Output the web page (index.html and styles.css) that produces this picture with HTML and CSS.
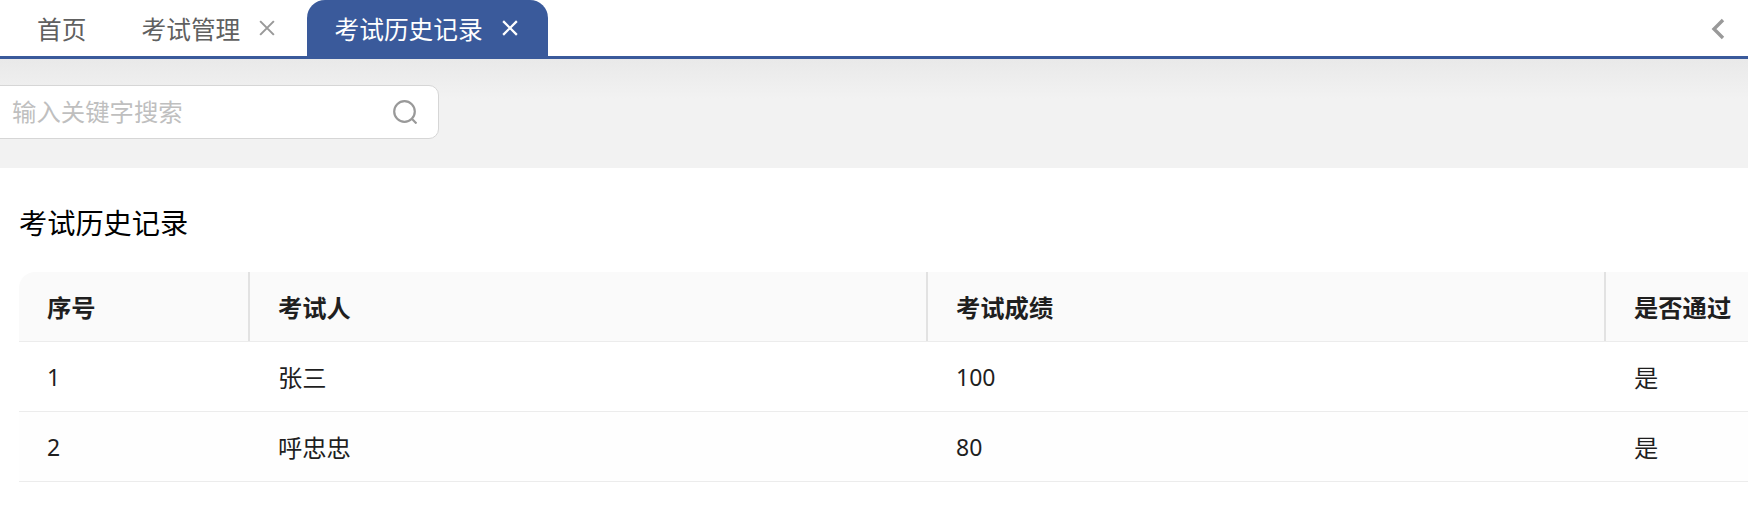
FILE: index.html
```html
<!DOCTYPE html>
<html lang="zh-CN">
<head>
<meta charset="utf-8">
<title>考试历史记录</title>
<link rel="stylesheet" href="styles.css">
</head>
<body>
<div class="tabbar">
  <div class="tab tab-home">首页</div>
  <div class="tab tab-plain">考试管理<svg class="close" viewBox="0 0 14 14"><path d="M1 1L13 13M13 1L1 13"/></svg></div>
  <div class="tab tab-active">考试历史记录<svg class="close" viewBox="0 0 14 14"><path d="M1 1L13 13M13 1L1 13"/></svg></div>
  <div class="spacer"></div>
  <svg class="chevron" viewBox="0 0 14 22"><path d="M12 2L3 11L12 20"/></svg>
</div>
<div class="searchband">
  <div class="search">
    <span class="placeholder">输入关键字搜索</span>
    <svg class="searchicon" viewBox="0 0 24 24"><circle cx="11.5" cy="11.5" r="10.3"/><path d="M18.8 18.8L23.5 23.5"/></svg>
  </div>
</div>
<div class="content">
  <h1 class="title">考试历史记录</h1>
  <table class="grid">
    <colgroup><col class="c1"><col class="c2"><col class="c3"><col class="c4"></colgroup>
    <thead>
      <tr><th>序号</th><th>考试人</th><th>考试成绩</th><th>是否通过</th></tr>
    </thead>
    <tbody>
      <tr><td class="num">1</td><td>张三</td><td class="num">100</td><td>是</td></tr>
      <tr class="alt"><td class="num">2</td><td>呼忠忠</td><td class="num">80</td><td>是</td></tr>
    </tbody>
  </table>
</div>
</body>
</html>
```
FILE: styles.css
```css
* { box-sizing: border-box; }
html, body { margin: 0; padding: 0; background: #fff; overflow: hidden; width: 1748px; height: 510px; }
body { font-family: "Noto Sans", "Noto Sans CJK SC", sans-serif; color: #1f1f1f; }

.tabbar { display: flex; align-items: stretch; height: 59px; border-bottom: 3px solid #3a5a9b; background: #fff; }
.tab { display: flex; align-items: center; font-size: 24.7px; color: #606060; height: 56px; }
.tab-home { padding-left: 37px; width: 141.5px; }
.tab-plain { width: 165.5px; }
.tab-active { width: 241px; padding-left: 27.5px; background: #3a5a9b; color: #fff; border-radius: 18px 18px 0 0; }
.close { width: 16px; height: 16px; margin-left: 19px; fill: none; stroke: #999; stroke-width: 1.8; }
.tab-active .close { stroke: #fff; stroke-width: 2; }
.spacer { flex: 1; }
.chevron { width: 14px; height: 22px; margin: 17.5px 23.5px 0 0; fill: none; stroke: #999; stroke-width: 3.4; }

.searchband { height: 109px; padding-top: 26px; background: linear-gradient(#e9e9e9, #f2f2f2 40px); }
.search { display: flex; align-items: center; justify-content: space-between; width: 449px; height: 54px; margin-left: -10px; padding: 0 21px; border: 1px solid #d6d6d6; border-radius: 10px; background: #fff; }
.placeholder { font-size: 24.4px; color: #bfbfbf; position: relative; top: -2px; }
.searchicon { width: 24px; height: 24px; fill: none; stroke: #999; stroke-width: 2.2; }

.content { padding: 0 0 0 19px; }
.title { margin: 0; padding-top: 35px; height: 105px; font-size: 28.2px; font-weight: 400; line-height: 40px; color: #000; }
.grid { width: 2265px; margin-top: -1px; table-layout: fixed; border-collapse: separate; border-spacing: 0; font-size: 24.3px; }
.c1 { width: 231px; }
.c2, .c3, .c4 { width: 678px; }
.grid th { position: relative; height: 70px; padding: 0 0 0 28px; background: #fafafa; text-align: left; font-size: 24.3px; font-weight: 700; color: #1f1f1f; border-bottom: 1px solid #ececec; }
.grid th:first-child { border-top-left-radius: 16px; }
.grid th + th::before { content: ""; position: absolute; left: -2px; top: 0; bottom: 0; width: 2px; background: #e2e2e2; }
.grid td { height: 70px; padding: 0 0 0 28px; border-bottom: 1px solid #ececec; color: #1f1f1f; }
.grid td.num { font-size: 23px; }
.alt td { background: #fefefe; }
```
